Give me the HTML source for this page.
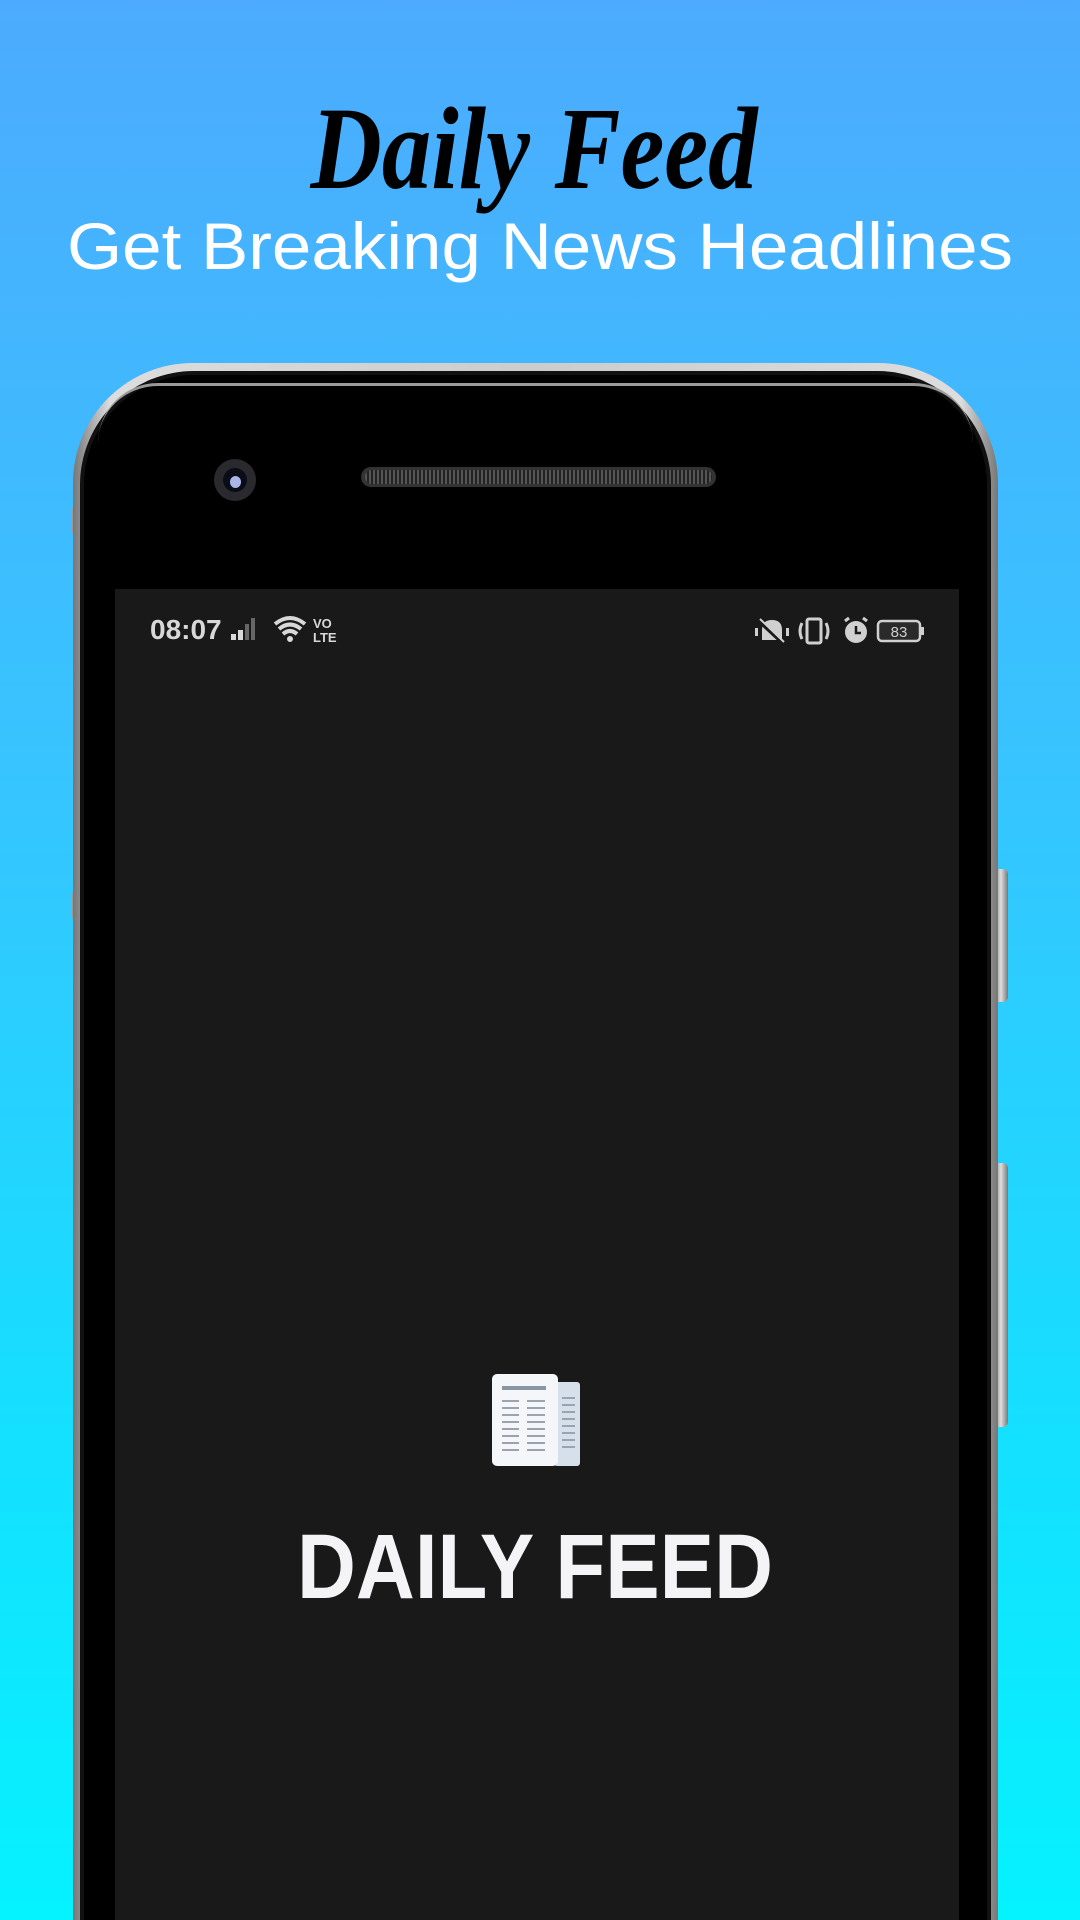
<!DOCTYPE html>
<html><head><meta charset="utf-8"><style>
html,body{margin:0;padding:0;width:1080px;height:1920px;overflow:hidden;}
body{position:relative;background:linear-gradient(180deg,#4cabfe 0%,#37c4ff 40%,#14e0ff 75%,#05f2ff 100%);font-family:"Liberation Sans",sans-serif;}
.abs{position:absolute;}
</style></head><body>
<svg class="abs" style="left:0;top:0" width="1080" height="300">
<text x="534" y="188" text-anchor="middle" font-family="Liberation Serif" font-style="italic" font-weight="bold" font-size="118" textLength="447" lengthAdjust="spacingAndGlyphs" fill="#000">Daily Feed</text>
<text x="540" y="269" text-anchor="middle" font-family="Liberation Sans" font-size="66" textLength="946" lengthAdjust="spacingAndGlyphs" fill="#fff">Get Breaking News Headlines</text>
</svg>
<div class="abs" style="left:994px;top:869px;width:14px;height:133px;background:linear-gradient(90deg,#888,#ddd,#777);border-radius:0 5px 5px 0"></div>
<div class="abs" style="left:994px;top:1163px;width:14px;height:264px;background:linear-gradient(90deg,#888,#ddd,#777);border-radius:0 5px 5px 0"></div>
<div class="abs" style="left:72px;top:508px;width:8px;height:25px;background:#999"></div>
<div class="abs" style="left:72px;top:893px;width:8px;height:25px;background:#999"></div>
<div class="abs" style="left:73px;top:363px;width:925px;height:1557px;border-radius:120px 120px 0 0;background:linear-gradient(90deg,#777,#ddd 4%,#ccc 50%,#ddd 96%,#777)"></div>
<div class="abs" style="left:80px;top:371px;width:911px;height:1549px;border-radius:114px 114px 0 0;background:#111"></div>
<div class="abs" style="left:84px;top:375px;width:903px;height:1545px;border-radius:110px 110px 0 0;background:#000"></div>
<div class="abs" style="left:98px;top:383px;width:875px;height:60px;border-radius:100px 100px 0 0;border-top:3px solid #9a9a9a;box-sizing:border-box"></div>
<div class="abs" style="left:214px;top:459px;width:42px;height:42px;border-radius:50%;background:#2a2a2e"></div>
<div class="abs" style="left:223px;top:468px;width:24px;height:24px;border-radius:50%;background:#0a0d18"></div>
<div class="abs" style="left:230px;top:476px;width:11px;height:12px;border-radius:50%;background:#aab6e8"></div>
<div class="abs" style="left:361px;top:467px;width:355px;height:20px;border-radius:10px;background:#333;"></div>
<div class="abs" style="left:365px;top:470px;width:347px;height:14px;border-radius:7px;background:repeating-linear-gradient(90deg,#555 0 2px,#222 2px 4px)"></div>
<div class="abs" style="left:115px;top:589px;width:844px;height:1331px;background:#191919"></div>
<div class="abs" style="left:150px;top:614px;color:#d8d8d8;font-size:28px;font-weight:bold;">08:07</div>
<svg class="abs" style="left:228px;top:614px" width="120" height="36">
<rect x="3" y="20" width="5" height="6" fill="#d8d8d8"/><rect x="10" y="16" width="5" height="10" fill="#d8d8d8"/><rect x="17" y="10" width="4" height="16" fill="#666"/><rect x="23" y="4" width="4" height="22" fill="#666"/>
<path d="M47 10 Q62 -2 77 10 M51 15 Q62 6 73 15 M55 20 Q62 14 69 20" stroke="#d8d8d8" stroke-width="4" fill="none"/><circle cx="62" cy="25" r="3" fill="#d8d8d8"/>
<text x="85" y="14" font-size="13" font-weight="bold" fill="#d8d8d8" font-family="Liberation Sans">VO</text>
<text x="85" y="28" font-size="13" font-weight="bold" fill="#d8d8d8" font-family="Liberation Sans">LTE</text>
</svg>
<svg class="abs" style="left:752px;top:614px" width="180" height="36">
<path d="M10 26 L10 16 Q10 6 20 6 Q30 6 30 16 L30 26 Z" fill="#d0d0d0"/><line x1="6" y1="6" x2="32" y2="30" stroke="#191919" stroke-width="4"/><line x1="8" y1="5" x2="32" y2="28" stroke="#d0d0d0" stroke-width="2"/><rect x="3" y="14" width="3" height="8" fill="#d0d0d0"/><rect x="34" y="14" width="3" height="8" fill="#d0d0d0"/>
<rect x="55" y="5" width="14" height="24" rx="2" stroke="#d0d0d0" stroke-width="3" fill="none"/><path d="M50 9 Q46 17 50 25 M74 9 Q78 17 74 25" stroke="#d0d0d0" stroke-width="3" fill="none"/>
<circle cx="104" cy="18" r="11" fill="#d0d0d0"/><path d="M104 12 L104 19 L109 19" stroke="#191919" stroke-width="2.5" fill="none"/><path d="M93 7 L97 4 M115 7 L111 4" stroke="#d0d0d0" stroke-width="3"/>
<rect x="126" y="7" width="42" height="20" rx="4" stroke="#d0d0d0" stroke-width="2.5" fill="#2a2a2a"/><rect x="169" y="13" width="3" height="8" fill="#d0d0d0"/>
<text x="147" y="23" text-anchor="middle" font-size="15" fill="#d0d0d0" font-family="Liberation Sans">83</text>
</svg>
<svg class="abs" style="left:490px;top:1372px" width="94" height="96">
<rect x="64" y="10" width="26" height="84" rx="3" fill="#d6e0ea"/>
<rect x="2" y="2" width="66" height="92" rx="5" fill="#f4f6f9"/>
<rect x="12" y="14" width="44" height="4" fill="#8a96a4"/>
<g stroke="#9aa4b0" stroke-width="2">
<path d="M12 29h17M37 29h18M12 36h17M37 36h18M12 43h17M37 43h18M12 50h17M37 50h18M12 57h17M37 57h18M12 64h17M37 64h18M12 71h17M37 71h18M12 78h17M37 78h18"/>
<path d="M72 26h13M72 33h13M72 40h13M72 47h13M72 54h13M72 61h13M72 68h13M72 75h13"/>
</g>
</svg>
<svg class="abs" style="left:290px;top:1520px" width="500" height="90">
<text x="7" y="78" font-family="Liberation Sans" font-weight="bold" font-size="92" textLength="476" lengthAdjust="spacingAndGlyphs" fill="#f4f4f6">DAILY FEED</text>
</svg>
</body></html>
